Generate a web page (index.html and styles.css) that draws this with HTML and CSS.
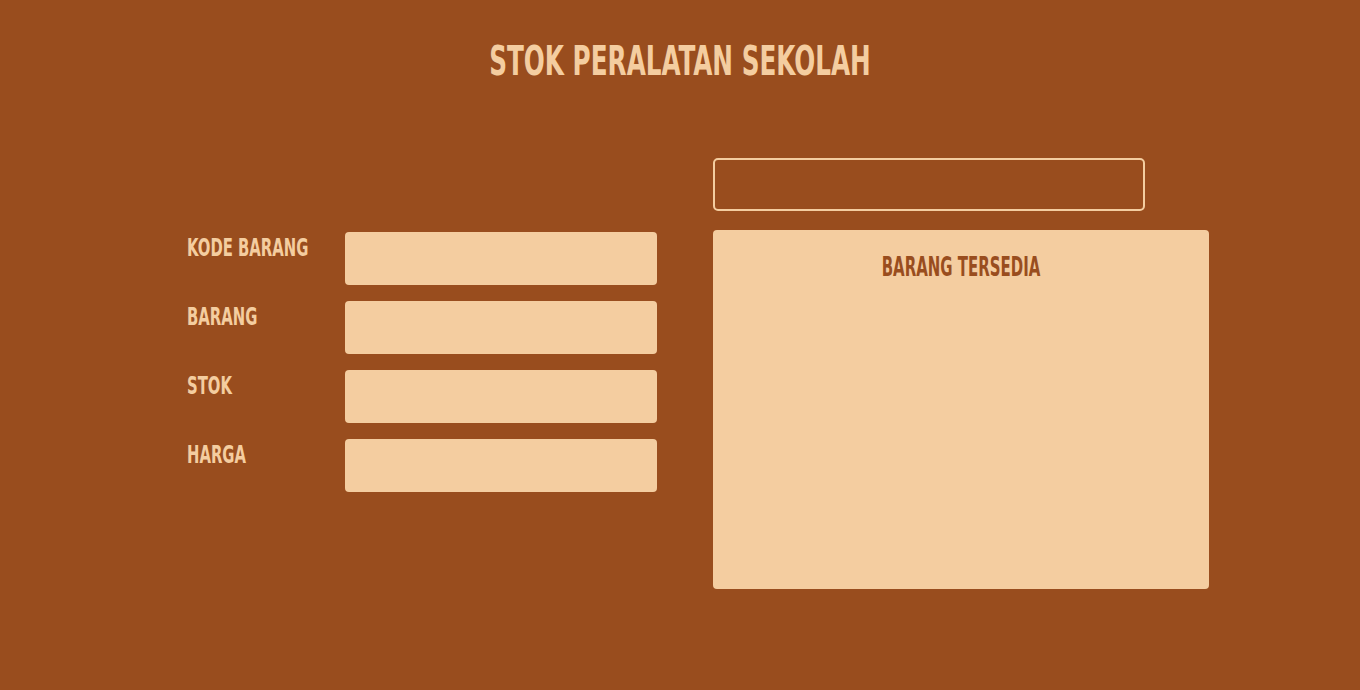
FILE: index.html
```html
<!DOCTYPE html>
<html lang="id">
<head>
    <meta charset="UTF-8">
    <meta name="viewport" content="width=device-width, initial-scale=1.0">
    <title>Stok Peralatan Sekolah</title>
    <link rel="stylesheet" href="styles.css">
</head>
<body>
    <h1 class="page-title">STOK PERALATAN SEKOLAH</h1>

    <div class="stock-layout">
        <form class="stock-form">
            <div class="form-row">
                <label class="form-label" for="kode">KODE BARANG</label>
                <input class="form-input" type="text" id="kode">
            </div>
            <div class="form-row">
                <label class="form-label" for="barang">BARANG</label>
                <input class="form-input" type="text" id="barang">
            </div>
            <div class="form-row">
                <label class="form-label" for="stok">STOK</label>
                <input class="form-input" type="text" id="stok">
            </div>
            <div class="form-row">
                <label class="form-label" for="harga">HARGA</label>
                <input class="form-input" type="text" id="harga">
            </div>
        </form>

        <div class="stock-side">
            <input class="search-input" type="text">
            <div class="stock-panel">
                <h2 class="panel-title">BARANG TERSEDIA</h2>
            </div>
        </div>
    </div>
</body>
</html>
```

FILE: styles.css
```css
body {
    margin: 0;
    min-height: 100vh;
    background: #994d1e;
    color: #f4cda0;
    font-family: "DejaVu Sans Condensed", "DejaVu Sans", sans-serif;
    font-weight: bold;
}

/* the original font is a narrow display face, squeeze the condensed one */
.page-title,
.form-label,
.panel-title {
    white-space: nowrap;
}

.page-title {
    margin: 0;
    padding-top: 38px;
    text-align: center;
    font-size: 41px;
    line-height: 46px;
    transform: scaleX(0.67);
}

.stock-layout {
    display: flex;
    gap: 56px;
    padding-left: 187px;
    margin-top: 74px;
}

.stock-form {
    display: flex;
    flex-direction: column;
    gap: 16px;
    padding-top: 74px;
}

.form-row {
    display: flex;
    align-items: flex-start;
}

.form-label {
    width: 158px;
    padding-top: 3px;
    font-size: 25px;
    line-height: 25px;
    transform: scaleX(0.66);
    transform-origin: left top;
}

.form-input {
    box-sizing: border-box;
    width: 312px;
    height: 53px;
    border: none;
    border-radius: 4px;
    background: #f4cda0;
}

.stock-side {
    display: flex;
    flex-direction: column;
    gap: 19px;
}

.search-input {
    box-sizing: border-box;
    width: 432px;
    height: 53px;
    border: 2px solid #f4cda0;
    border-radius: 5px;
    background: transparent;
}

.stock-panel {
    width: 496px;
    height: 359px;
    border-radius: 4px;
    background: #f4cda0;
}

.panel-title {
    margin: 0;
    padding-top: 24px;
    text-align: center;
    color: #994d1e;
    font-size: 26px;
    line-height: 26px;
    transform: scaleX(0.64);
}
```
